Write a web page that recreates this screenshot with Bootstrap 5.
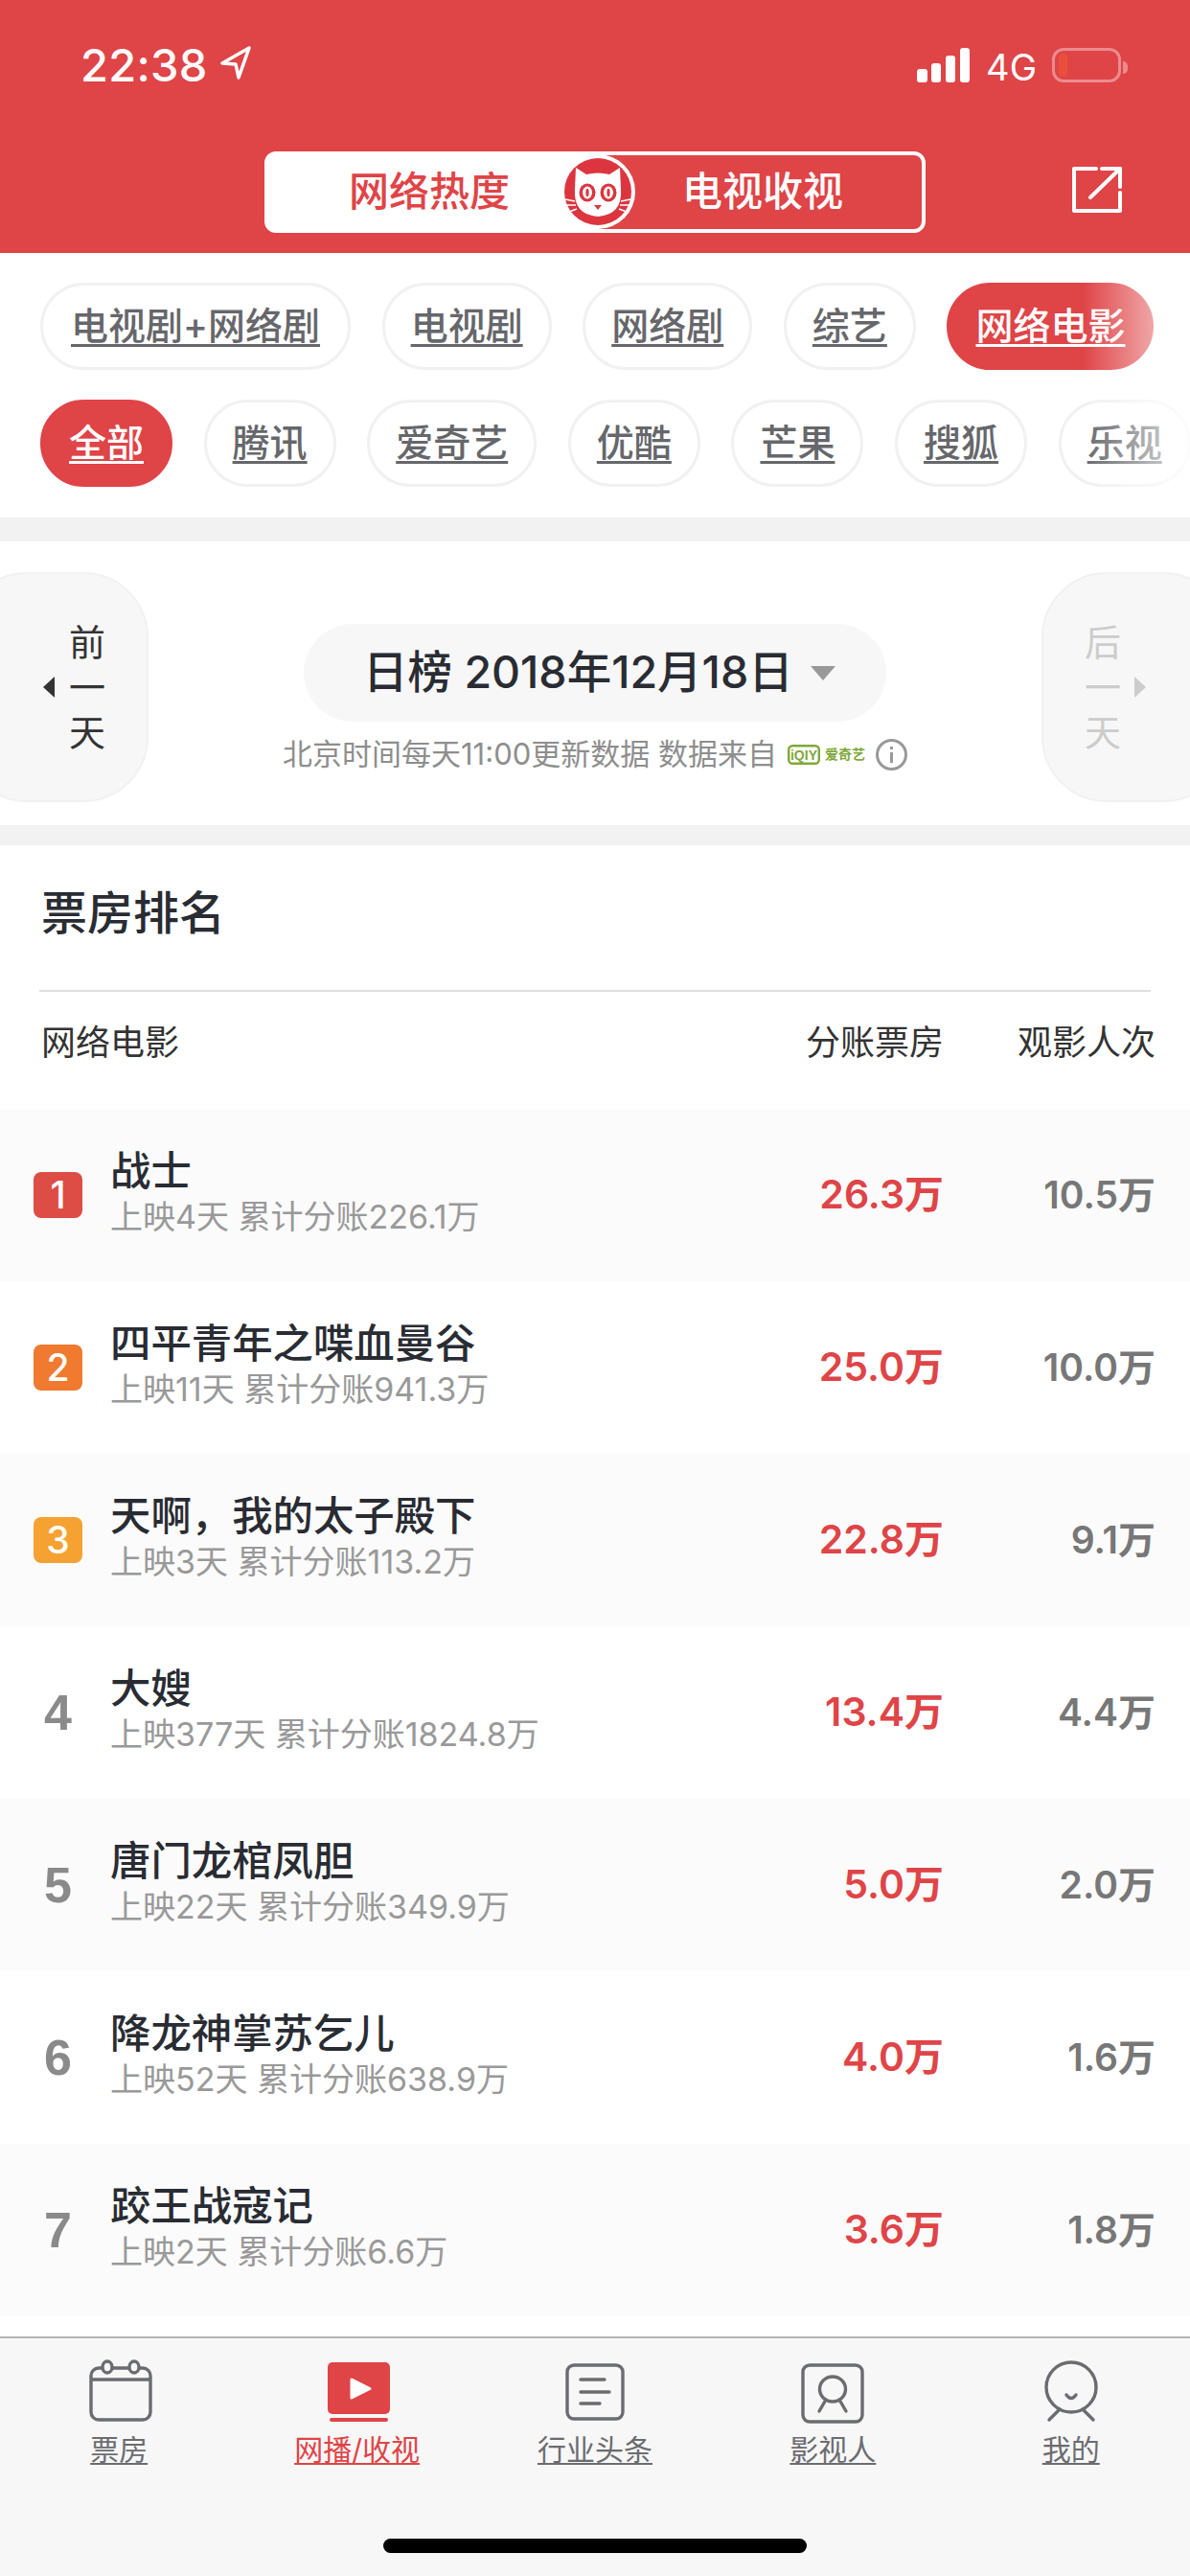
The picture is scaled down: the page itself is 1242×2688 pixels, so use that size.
<!doctype html>
<html lang="zh-CN">
<head>
<meta charset="utf-8">
<title>网络电影票房</title>
<link href="https://cdn.jsdelivr.net/npm/bootstrap@5.3.0/dist/css/bootstrap.min.css" rel="stylesheet">
<style>
html,body{width:1242px;height:2688px;overflow:hidden;background:#fff}
body{font-family:Inter,"Noto Sans CJK SC",sans-serif;color:#292c33}
.shell{width:1242px;height:2688px;overflow:hidden}
.top-red{height:264px;background:#df4447;color:#fff;flex:none}
.status{height:158px;padding:50px 65px 0 84px}
.clock{font-size:47px;font-weight:500;line-height:44px;letter-spacing:.3px;margin-top:-4px}
.loc{margin-left:12px;margin-top:-3px}
.net{font-size:38px;line-height:40px;margin:0 16px}
.batt{width:72px;height:36px;border:3px solid rgba(255,255,255,.38);border-radius:12px;padding:3px 4px}
.batt i{display:block;width:9px;height:100%;background:#e94f3b;border-radius:4px}
.nub{width:5px;height:13px;background:rgba(255,255,255,.38);border-radius:0 6px 6px 0;margin-left:2px}
.switch-line{padding-left:276px}
.toggle{width:690px;height:85px;border:4px solid #fff;border-radius:12px;font-size:42px;font-weight:500}
.toggle-l{background:#fff;color:#df4447;width:345px;padding-left:84px;line-height:76px}
.toggle-r{padding-left:87px;line-height:76px}
.cat{left:305px;top:-1px;width:78px;height:78px}
.share{margin-left:151px;margin-top:14px}
.filters{height:276px;padding-top:31px;flex:none}
.chip-line{gap:32.6px;padding-left:42px;height:91px;white-space:nowrap}
.chip-line+.chip-line{margin-top:31px}
.chip{flex:none;height:91px;border:3px solid #f1f1f1;border-radius:46px;padding:0 27px;font-size:39px;font-weight:500;line-height:84px;color:#66676b;text-decoration-thickness:3px;text-underline-offset:5px;background:#fff}
.chip.chip-wide{padding:0 29px}
.chip.on{background:#df4447;border-color:#df4447;color:#fff}
.fade-r{right:0;top:0;bottom:0;width:112px;background:linear-gradient(to right,rgba(255,255,255,0),rgba(255,255,255,.8))}
.gap-band{background:#f2f2f2;flex:none}
.band-a{height:25px}.band-b{height:21px}
.date-area{height:296px;flex:none;overflow:hidden;padding-top:32px}
.day-btn{flex:none;width:195px;height:240px;background:#f7f7f7;border:2px solid #f1f1f1;border-radius:68px;font-size:38px;line-height:47px}
.day-prev{margin-left:-40px;padding-left:83px;gap:15px;color:#333}
.day-next{margin-right:-40px;padding-left:43px;gap:14px;color:#ccc}
.tri-l{width:0;height:0;border-style:solid;border-width:11px 12px 11px 0;border-color:transparent #333 transparent transparent}
.tri-r{width:0;height:0;border-style:solid;border-width:11px 0 11px 12px;border-color:transparent transparent transparent #ccc}
.date-mid{padding-top:54px}
.date-pill{height:102px;width:608px;background:#f7f7f7;border-radius:51px;font-size:46.5px;font-weight:500;padding-left:62px;gap:18px}
.tri-d{width:0;height:0;border-style:solid;border-width:15px 13px 0 13px;border-color:#999 transparent transparent transparent}
.note{font-size:31px;color:#8e8e8e;line-height:36px;margin-top:16px;gap:11px;white-space:nowrap}
.iq-name{font-size:14px;color:#7fa83a;font-weight:700;margin-left:-6px}
.sec-title{font-size:48px;font-weight:500;line-height:60px;padding:41px 0 0 43px;height:151px;flex:none}
.rule{height:2px;background:#e0e0e0;margin:0 41px;flex:none}
.head-row{height:122px;padding:0 36px 16px 43px;font-size:36px;color:#333;flex:none}
.col-box{width:221px;text-align:right;flex:none}
.col-sum{flex:1 1 auto;text-align:right}
.film{height:180px;padding-right:36px;flex:none}
.film.alt{background:#fbfbfb}
.rank{width:51px;height:48px;margin-left:35px;margin-right:29px;flex:none;font-size:39px;font-weight:500;color:#fff;border-radius:8px;line-height:48px;text-align:center}
.r1{background:#dd4d45}.r2{background:#ef7a30}.r3{background:#f5a233}
.rank.plain{font-family:"Liberation Sans",sans-serif;color:#8a8a8a;font-size:52px;font-weight:700}
.film-name{font-size:42.4px;font-weight:500;line-height:50px;margin-top:-4px}
.film-sub{font-size:34px;color:#999;line-height:46px}
.v-sum{color:#df4447;font-size:41px;font-weight:600}
.v-view{color:#777;font-size:39px;font-weight:600}
.dock{height:250px;background:#f7f7f7;border-top:2px solid #b4b4b4;flex:none;padding-top:20px}
.dock a{width:20%;color:#6b6c70;font-size:30px;line-height:40px;text-decoration-thickness:2px;text-underline-offset:3px}
.dock a.on{color:#df4447}
.dock svg{display:block;margin:0 auto 4px}
.home-bar{width:442px;height:15px;background:#000;border-radius:8px;bottom:24px;left:400px}
</style>
</head>
<body>
<div class="shell d-flex flex-column position-relative">

  <header class="top-red">
    <div class="status d-flex align-items-start">
      <span class="clock">22:38</span>
      <svg class="loc" width="34" height="38" viewBox="0 0 34 38"><path d="M31 3 3 19l14 1 3 14Z" fill="none" stroke="#fff" stroke-width="3.5" stroke-linejoin="round"/></svg>
      <span class="ms-auto d-flex align-items-start">
        <svg width="56" height="36" viewBox="0 0 56 36"><rect x="0" y="22" width="11" height="14" rx="3" fill="#fff"/><rect x="15" y="16" width="10" height="20" rx="3" fill="#fff"/><rect x="30" y="8" width="10" height="28" rx="3" fill="#fff"/><rect x="45" y="0" width="10" height="36" rx="3" fill="#fff"/></svg>
        <span class="net">4G</span>
        <span class="batt"><i></i></span>
        <span class="nub align-self-center"></span>
      </span>
    </div>
    <div class="switch-line d-flex align-items-start">
      <div class="toggle d-flex position-relative">
        <div class="toggle-l">网络热度</div>
        <div class="toggle-r">电视收视</div>
        <svg class="cat position-absolute" viewBox="0 0 78 78">
          <circle cx="39" cy="39" r="39" fill="#fff"/>
          <circle cx="39" cy="39" r="35" fill="#dc3540"/>
          <path d="M16 14 27 21Q39 18 51 21L62 14 63 36Q65 63 39 65 13 63 15 36Z" fill="#fff"/>
          <g stroke="#fff" stroke-width="1.6"><path d="M5 47 15 49M6 53 16 53M9 60 17 57M73 47 63 49M72 53 62 53M69 60 61 57"/></g>
          <ellipse cx="28" cy="40" rx="8.5" ry="9.5" fill="#dc3540"/><ellipse cx="50" cy="40" rx="8.5" ry="9.5" fill="#dc3540"/>
          <ellipse cx="28" cy="40" rx="5" ry="6.5" fill="#fff"/><ellipse cx="50" cy="40" rx="5" ry="6.5" fill="#fff"/>
          <ellipse cx="28" cy="40" rx="1.6" ry="4.2" fill="#dc3540"/><ellipse cx="50" cy="40" rx="1.6" ry="4.2" fill="#dc3540"/>
          <path d="M35 53h8l-4 5Z" fill="#dc3540"/>
        </svg>
      </div>
      <svg class="share" width="56" height="52" viewBox="0 0 56 52" fill="none" stroke="#fff" stroke-width="4" stroke-linecap="round" stroke-linejoin="round"><path d="M27 4H4V48H52V29"/><path d="M21 34 52 4"/><path d="M33 4H52V23"/></svg>
    </div>
  </header>

  <section class="filters position-relative">
    <div class="chip-line d-flex overflow-hidden">
      <a class="chip chip-wide" href="#">电视剧+网络剧</a>
      <a class="chip" href="#">电视剧</a>
      <a class="chip" href="#">网络剧</a>
      <a class="chip" href="#">综艺</a>
      <a class="chip on" href="#">网络电影</a>
    </div>
    <div class="chip-line d-flex overflow-hidden">
      <a class="chip on" href="#">全部</a>
      <a class="chip" href="#">腾讯</a>
      <a class="chip" href="#">爱奇艺</a>
      <a class="chip" href="#">优酷</a>
      <a class="chip" href="#">芒果</a>
      <a class="chip" href="#">搜狐</a>
      <a class="chip" href="#">乐视</a>
    </div>
    <div class="fade-r position-absolute"></div>
  </section>

  <div class="gap-band band-a"></div>

  <section class="date-area d-flex">
    <div class="day-btn day-prev d-flex align-items-center">
      <span class="tri-l"></span>
      <span>前<br>一<br>天</span>
    </div>
    <div class="date-mid flex-fill d-flex flex-column align-items-center">
      <div class="date-pill d-flex align-items-center">
        <span>日榜 2018年12月18日</span>
        <span class="tri-d"></span>
      </div>
      <div class="note d-flex align-items-center">
        <span>北京时间每天11:00更新数据 数据来自</span>
        <svg width="34" height="21" viewBox="0 0 34 21"><rect x="1.2" y="1.2" width="31.6" height="18.6" rx="4" fill="#fff" stroke="#7fa83a" stroke-width="2.4"/><text x="17" y="15.5" font-size="14" font-weight="700" fill="#7fa83a" text-anchor="middle" font-family="Liberation Sans">iQIY</text></svg>
        <span class="iq-name">爱奇艺</span>
        <svg width="33" height="33" viewBox="0 0 33 33" fill="none" stroke="#999" stroke-width="3"><circle cx="16.5" cy="16.5" r="15"/><path d="M16.5 14v11"/><path d="M16.5 8v3"/></svg>
      </div>
    </div>
    <div class="day-btn day-next d-flex align-items-center">
      <span>后<br>一<br>天</span>
      <span class="tri-r"></span>
    </div>
  </section>

  <div class="gap-band band-b"></div>

  <main class="flex-fill overflow-hidden d-flex flex-column">
    <h1 class="sec-title m-0">票房排名</h1>
    <div class="rule"></div>
    <div class="head-row d-flex align-items-center">
      <span>网络电影</span>
      <span class="col-sum">分账票房</span>
      <span class="col-box">观影人次</span>
    </div>

    <div class="film alt d-flex align-items-center">
      <div class="rank r1">1</div>
      <div><div class="film-name">战士</div><div class="film-sub">上映4天 累计分账226.1万</div></div>
      <div class="col-sum v-sum">26.3万</div><div class="col-box v-view">10.5万</div>
    </div>
    <div class="film d-flex align-items-center">
      <div class="rank r2">2</div>
      <div><div class="film-name">四平青年之喋血曼谷</div><div class="film-sub">上映11天 累计分账941.3万</div></div>
      <div class="col-sum v-sum">25.0万</div><div class="col-box v-view">10.0万</div>
    </div>
    <div class="film alt d-flex align-items-center">
      <div class="rank r3">3</div>
      <div><div class="film-name">天啊，我的太子殿下</div><div class="film-sub">上映3天 累计分账113.2万</div></div>
      <div class="col-sum v-sum">22.8万</div><div class="col-box v-view">9.1万</div>
    </div>
    <div class="film d-flex align-items-center">
      <div class="rank plain">4</div>
      <div><div class="film-name">大嫂</div><div class="film-sub">上映377天 累计分账1824.8万</div></div>
      <div class="col-sum v-sum">13.4万</div><div class="col-box v-view">4.4万</div>
    </div>
    <div class="film alt d-flex align-items-center">
      <div class="rank plain">5</div>
      <div><div class="film-name">唐门龙棺凤胆</div><div class="film-sub">上映22天 累计分账349.9万</div></div>
      <div class="col-sum v-sum">5.0万</div><div class="col-box v-view">2.0万</div>
    </div>
    <div class="film d-flex align-items-center">
      <div class="rank plain">6</div>
      <div><div class="film-name">降龙神掌苏乞儿</div><div class="film-sub">上映52天 累计分账638.9万</div></div>
      <div class="col-sum v-sum">4.0万</div><div class="col-box v-view">1.6万</div>
    </div>
    <div class="film alt d-flex align-items-center">
      <div class="rank plain">7</div>
      <div><div class="film-name">跤王战寇记</div><div class="film-sub">上映2天 累计分账6.6万</div></div>
      <div class="col-sum v-sum">3.6万</div><div class="col-box v-view">1.8万</div>
    </div>
  </main>

  <nav class="dock d-flex align-items-start text-center">
    <a href="#">
      <svg width="72" height="72" viewBox="0 0 72 72" fill="none" stroke="#6b6c70" stroke-width="3.4"><rect x="7" y="11" width="62" height="54" rx="8"/><path d="M7 23H69"/><ellipse cx="24" cy="10" rx="5" ry="6" fill="#f7f7f7"/><ellipse cx="52" cy="10" rx="5" ry="6" fill="#f7f7f7"/></svg>
      票房
    </a>
    <a class="on" href="#">
      <svg width="72" height="72" viewBox="0 0 72 72"><rect x="5" y="5" width="65" height="54" rx="5" fill="#df4447"/><path d="M30 23 49 32.5 30 42Z" fill="#fff" stroke="#fff" stroke-width="3" stroke-linejoin="round"/><rect x="7" y="63" width="61" height="4" rx="2" fill="#df4447"/></svg>
      网播/收视
    </a>
    <a href="#">
      <svg width="72" height="72" viewBox="0 0 72 72" fill="none" stroke="#6b6c70" stroke-width="3.4" stroke-linecap="round"><rect x="7" y="8" width="58" height="56" rx="7"/><path d="M21 23H46M21 36H51M21 48H41"/></svg>
      行业头条
    </a>
    <a href="#">
      <svg width="72" height="72" viewBox="0 0 72 72" fill="none" stroke="#6b6c70" stroke-width="3.4" stroke-linecap="round"><rect x="5" y="8" width="62" height="59" rx="7"/><ellipse cx="36" cy="33" rx="13.5" ry="13"/><path d="M29 44 22 56M43 44 50 56"/></svg>
      影视人
    </a>
    <a href="#">
      <svg width="72" height="72" viewBox="0 0 72 72" fill="none" stroke="#6b6c70" stroke-width="3.4" stroke-linecap="round"><circle cx="36" cy="31" r="26"/><path d="M31 39Q36 46 41 39M24 54 13 65M48 54 59 65"/></svg>
      我的
    </a>
  </nav>
  <div class="home-bar position-absolute"></div>
</div>
<script src="https://cdn.jsdelivr.net/npm/bootstrap@5.3.0/dist/js/bootstrap.bundle.min.js"></script>
</body>
</html>
